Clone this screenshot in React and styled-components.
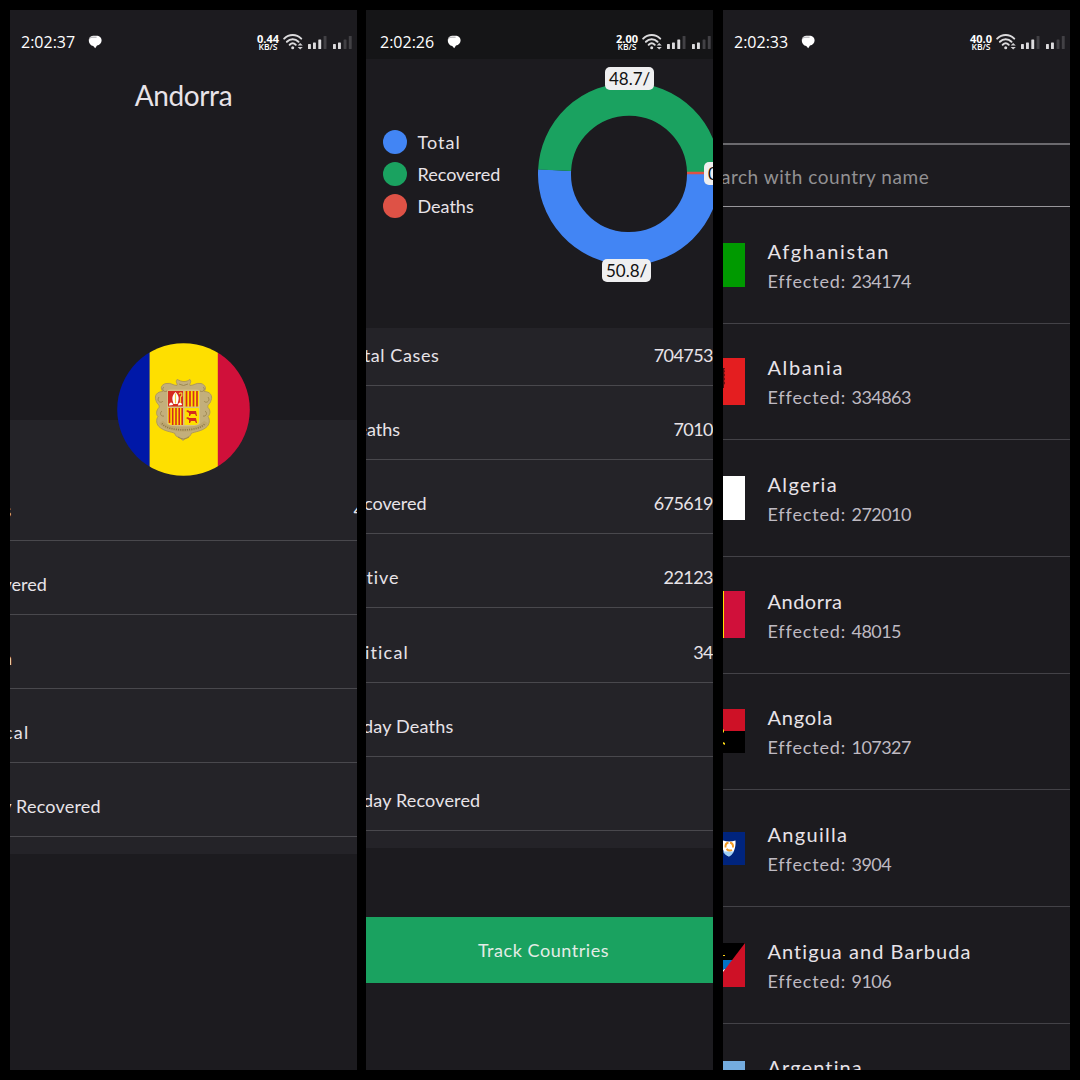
import React from "react";
import styled, { createGlobalStyle } from "styled-components";

const hand = `Lato, "Open Sans", sans-serif`;

const GlobalStyle = createGlobalStyle`
  * { box-sizing: border-box; }
  body { margin: 0; background: #000; }
`;

const Board = styled.main`
  display: flex;
  width: 1080px;
  height: 1080px;
  padding: 10px;
  overflow: hidden;
  background: #000;
  font-family: ${hand};
  color: #e8e3e8;
`;

const Phone = styled.section`
  display: flex;
  flex-direction: column;
  flex: none;
  width: 347px;
  height: 1060px;
  margin-right: ${(p) => p.$gap || 0}px;
  overflow: hidden;
  background: #1c1b1f;
`;

/* ---------- status bar ---------- */

const Bar = styled.header`
  display: flex;
  flex: none;
  align-items: center;
  height: 49px;
  padding: 15px 0 0 ${(p) => p.$left}px;
  background: ${(p) => (p.$dark ? "#151517" : "transparent")};
  color: #fff;
`;

const Clock = styled.time`
  width: 56px;
  font: 500 16px/20px "Open Sans", sans-serif;
  letter-spacing: 0;
  white-space: nowrap;
`;

const ChatIcon = styled.svg`
  flex: none;
  width: 14px;
  height: 14px;
  margin-left: 11px;
`;

const Speed = styled.div`
  flex: none;
  width: 24px;
  margin-left: ${(p) => p.$left}px;
  text-align: center;
  font: 700 11px/9px "Open Sans", sans-serif;
  white-space: nowrap;
`;

const Unit = styled.div`
  font-weight: 600;
  font-size: 8.5px;
  line-height: 8px;
`;

const Signals = styled.svg`
  flex: none;
  width: 70px;
  height: 16px;
  margin-left: 3px;
`;

function StatusBar({ time, speed, left, gap, dark }) {
  return (
    <Bar $left={left} $dark={dark}>
      <Clock>{time}</Clock>
      <ChatIcon viewBox="0 0 14 14">
        <path d="M5 .8h3.300C11.500.8 13.600 2.800 13.600 5.400c0 2.700-2 4.600-4.600 5L7.200 13.200 5.200 11C2.800 10.300 1 8.600.800 5.900.6 2.900 2.300.9 5 .8z" fill="#fff" />
        <path d="M.900 4.600C1.800 2.600 3.200 2.200 5 2.200h3.600" fill="none" stroke="#6b6a70" strokeWidth=".6" />
      </ChatIcon>
      <Speed $left={gap}>
        {speed}
        <Unit>KB/S</Unit>
      </Speed>
      <Signals viewBox="0 0 70 16">
        <g fill="none" stroke="#dcdbdd" strokeWidth="2" strokeLinecap="round">
          <path d="M1.200 4.600C6-.2 13.400-.2 18.200 4.600" />
          <path d="M3.900 7.700c3.300-3.200 8.300-3.200 11.600 0" />
          <path d="M6.700 10.700c1.800-1.700 4.200-1.700 6 0" />
        </g>
        <circle cx="9.700" cy="13.700" r="1.500" fill="#dcdbdd" />
        <path d="M14.600 11.600l2.600-2.600 2.600 2.600zM14.600 13l2.600 2.500 2.600-2.500z" fill="#cfced1" />
        <g fill="#dcdbdd">
          <rect x="25" y="10" width="2.900" height="5" rx=".6" />
          <rect x="30" y="8.500" width="2.900" height="6.500" rx=".6" />
          <rect x="35.300" y="5.500" width="2.900" height="9.500" rx=".6" />
          <rect x="50" y="10" width="2.900" height="5" rx=".6" />
          <rect x="55" y="8.500" width="2.900" height="6.500" rx=".6" />
        </g>
        <g fill="#424145">
          <rect x="40.600" y="2" width="2.900" height="13" rx=".6" />
          <rect x="60.600" y="5.500" width="2.900" height="9.500" rx=".6" />
          <rect x="65.800" y="2" width="2.900" height="13" rx=".6" />
        </g>
      </Signals>
    </Bar>
  );
}

/* ---------- shared statistics panel ---------- */

const Panel = styled.div`
  flex: none;
  height: ${(p) => p.$h}px;
  background: #242328;
`;

const StatRow = styled.div`
  display: flex;
  justify-content: space-between;
  align-items: flex-end;
  height: ${(p) => p.$h}px;
  margin: 0 ${(p) => p.$outR}px 0 ${(p) => p.$outL}px;
  padding-bottom: 18px;
  border-bottom: 1px solid #49484d;
  font-size: 18px;
  line-height: 24px;
  white-space: nowrap;
`;

const StatLabel = styled.span`
  letter-spacing: ${(p) => p.$track}px;
`;

const StatValue = styled.span`
  letter-spacing: -0.55px;
`;

function Stats({ rows, outL, outR, h, first }) {
  return (
    <Panel $h={h}>
      {rows.map(([label, value, track], i) => (
        <StatRow key={label} $h={i ? 74.15 : first} $outL={outL} $outR={outR}>
          <StatLabel $track={track}>{label}</StatLabel>
          {value && <StatValue>{value}</StatValue>}
        </StatRow>
      ))}
    </Panel>
  );
}

/* ---------- country detail ---------- */

const DetailTitle = styled.h1`
  margin: 18px 0 0;
  height: 37px;
  text-align: center;
  font-weight: 400;
  font-size: 28px;
  line-height: 36px;
  letter-spacing: -0.4px;
`;

const Avatar = styled.svg`
  flex: none;
  position: relative;
  width: 133px;
  height: 133px;
  margin: 229px auto -56.500px 107px;
`;

function AndorraFlag() {
  return (
    <Avatar viewBox="0 0 133 133">
      <defs>
        <clipPath id="round"><circle cx="66.500" cy="66.500" r="66.300" /></clipPath>
      </defs>
      <g clipPath="url(#round)">
        <rect width="33" height="133" fill="#0018a8" />
        <rect x="32.600" width="68.600" height="133" fill="#fedf00" />
        <rect x="100.800" width="33" height="133" fill="#d0103a" />
      </g>
      <path d="M60 36.500c-2 3 1 4 0 6-4 0-6-3-11-2-5 1-6 5-3 8-6 0-9 4-7 9 1 4 4 4 3 7-3 3-3 7-1 9-2 3-2 8 2 11 5 4 11 4 15 6 0 4 5 3 8 7 3-4 8-3 8-7 4-2 10-2 15-6 4-3 4-8 2-11 2-2 3-6 0-9-1-3 2-3 3-7 2-5-1-9-7-9 3-3 1-7-3-8-5-1-7 2-11 2-1-2 2-3 0-6-2 1-3 2-6 2s-4-1-7-2z" fill="#c3af7b" stroke="#aa955c" strokeWidth=".9" />
      <path d="M47 44c-3 2 0 6 3 4M86 44c3 2 0 6-3 4M42 54c-3 4 2 7 4 4M91 54c3 4-2 7-4 4M45 68c-3 2-1 6 2 5M88 68c3 2 1 6-2 5M62 41q4.500 3 9 0M61 94q5.500 4 11 0" fill="none" stroke="#9a854e" strokeWidth=".9" />
      <rect x="50" y="46.500" width="33" height="36.500" rx="3" fill="#d6c083" />
      <rect x="51" y="48" width="15" height="15.500" fill="#d52b1e" />
      <path d="M58.500 49q4 4 3 8l-1 4h-4l-1-4q-1-4 3-8zM52 62.500c0-4 4-4 4-.5zM61 62.500c0-4 4-4 4-.5z" fill="#fff" />
      <path d="M58.500 50.500v10M62 51c3-3 4 1 1.500 3v6" stroke="#f2cf3a" strokeWidth="1.200" fill="none" />
      <rect x="67.500" y="48" width="14.500" height="15.500" fill="#fedf00" />
      <path d="M69.500 48v15.500M73 48v15.500M76.500 48v15.500M80 48v15.500" stroke="#d52b1e" strokeWidth="1.700" />
      <path d="M51 65h15v17H55q-4 0-4-4z" fill="#fedf00" />
      <path d="M52.500 65v15M55.700 65v17M59 65v17M62.200 65v17M65.200 65v17" stroke="#d52b1e" strokeWidth="1.600" />
      <path d="M67.500 65H82v13q0 4-4 4H67.500z" fill="#fedf00" />
      <path d="M69 68l2-1 1 1h7l1 5h-1l-1-2h-4l-1 2h-1v-3zM69 75l2-1 1 1h7l1 5h-1l-1-2h-4l-1 2h-1v-3z" fill="#d52b1e" />
      <path d="M44 79c6 10 39 10 45 0" fill="none" stroke="#bda76f" strokeWidth="4.500" />
      <path d="M45 80.500c6 8.500 37 8.500 43 0" fill="none" stroke="#8a7545" strokeWidth="1.600" strokeDasharray="1 1.200" />
    </Avatar>
  );
}

/* ---------- world overview ---------- */

const Overview = styled.div`
  display: flex;
  flex: none;
  align-items: flex-start;
  height: 269px;
`;

const Legend = styled.ul`
  display: flex;
  flex-direction: column;
  flex: none;
  gap: 8px;
  width: 154px;
  margin: 71px 0 0;
  padding: 0 0 0 16.500px;
  list-style: none;
`;

const LegendItem = styled.li`
  display: flex;
  align-items: center;
  gap: 11px;
  height: 24px;
  font-size: 18px;
  line-height: 24px;
  letter-spacing: ${(p) => p.$track}px;

  &::before {
    content: "";
    width: 24px;
    height: 24px;
    border-radius: 50%;
    background: ${(p) => p.$color};
  }
`;

const Chart = styled.div`
  position: relative;
  flex: none;
  width: 182px;
  height: 182px;
  margin: 24px 0 0 17.500px;
`;

const Ring = styled.svg`
  display: block;
  width: 182px;
  height: 182px;
`;

const Badge = styled.span`
  position: absolute;
  left: ${(p) => p.$x}px;
  top: ${(p) => p.$y}px;
  width: 49px;
  height: 23px;
  padding-left: 4px;
  border-radius: 5px;
  background: #efeff0;
  color: #111;
  font-size: 17px;
  line-height: 24px;
  letter-spacing: 0px;
  white-space: nowrap;
`;

const TrackButton = styled.button`
  flex: none;
  height: 66px;
  margin-top: 69px;
  padding: 0 0 1px 8px;
  border: 0;
  background: #1aa260;
  color: #e3ece6;
  font: 18px/24px ${hand};
  letter-spacing: 0.55px;
`;

/* ---------- country list ---------- */

const SearchBox = styled.div`
  display: flex;
  flex: none;
  align-items: center;
  height: 63.500px;
  margin-top: 84px;
  padding-top: 2px;
  border-top: 2px solid #6b6a6e;
  border-bottom: 1px solid #98979b;
  color: #929193;
  font-size: 19px;
  white-space: nowrap;
`;

const Hint = styled.span`
  margin-left: -23.500px;
  letter-spacing: 0.55px;
`;

const Country = styled.article`
  display: flex;
  flex: none;
  align-items: center;
  height: 116.7px;
  border-bottom: 1px solid #434247;

  &:first-of-type {
    height: 117px;
  }
`;

const Flag = styled.svg`
  flex: none;
  width: 22px;
  height: ${(p) => p.$h}px;
`;

const Names = styled.div`
  display: flex;
  flex-direction: column;
  gap: 7px;
  margin-left: 22.500px;
  padding-top: 2px;
  white-space: nowrap;
`;

const Name = styled.span`
  font-size: 20px;
  line-height: 24px;
  letter-spacing: ${(p) => p.$track}px;
`;

const Effected = styled.span`
  color: #bfbac2;
  font-size: 18px;
  line-height: 23px;
  letter-spacing: 0.85px;
`;

const Count = styled.span`
  letter-spacing: -0.55px;
`;

const countries = [
  ["Afghanistan", "234174", 1.65, 44, <rect width="22" height="44" fill="#009a00" />],
  ["Albania", "334863", 1.6, 47, <>
    <rect width="22" height="47" fill="#e41e20" />
    <path d="M0 10h2l-1 2 1 1-1 2 1 2-1 2 1 2-1 2 1 2-1 2v3H0z" fill="#4b0d0e" />
  </>],
  ["Algeria", "272010", 1.35, 44, <rect width="22" height="44" fill="#fff" />],
  ["Andorra", "48015", 0.5, 47, <>
    <rect width="22" height="47" fill="#d0103a" />
    <rect width="1" height="47" fill="#fedf00" />
  </>],
  ["Angola", "107327", 0.8, 44, <>
    <rect width="22" height="22" fill="#ce1126" />
    <rect y="22" width="22" height="22" fill="#000" />
    <path d="M0 20.500h1v3H0zM0 33l2 1v2l-2-1z" fill="#f9d616" />
  </>],
  ["Anguilla", "3904", 1.3, 33, <>
    <rect width="22" height="33" fill="#00247d" />
    <path d="M0 8.500q6 2 12.500 0c.5 8-2 13-6.500 16-3-1.500-5-4-6-7z" fill="#fff" />
    <path d="M0 19.500h11q-2 3.500-5 5-4-1-6-5z" fill="#9fcff5" />
    <path d="M2.500 15.500q-.5-4 3-5M7 10.500q3.500 1 3 5M9 18q-3 1.500-5.500-1" fill="none" stroke="#f49b25" strokeWidth="1.900" />
  </>],
  ["Antigua and Barbuda", "9106", 1.05, 44, <>
    <rect width="22" height="44" fill="#000" />
    <rect y="17" width="22" height="11" fill="#0072c6" />
    <path d="M0 27l2-1v4H0z" fill="#fff" />
    <path d="M22 0v44H0V29z" fill="#ce1126" />
    <path d="M0 12h2v1H0z" fill="#fcd116" />
  </>],
  ["Argentina", "", 1.1, 41, <rect width="22" height="41" fill="#74acdf" />],
];

export default function App() {
  return (
    <Board>
      <GlobalStyle />

      <Phone $gap={9}>
        <StatusBar time="2:02:37" speed="0.44" left={11} gap={154} />
        <DetailTitle>Andorra</DetailTitle>
        <AndorraFlag />
        <Stats
          h={434}
          first={121}
          outL={-46}
          outR={-46}
          rows={[
            ["Cases", "48015", 0.3],
            ["Recovered", "", 0],
            ["Death", "", -0.1],
            ["Critical", "", 1.25],
            ["Today Recovered", "", 0.2],
          ]}
        />
      </Phone>

      <Phone $gap={10}>
        <StatusBar time="2:02:26" speed="2.00" left={14} gap={154} dark />
        <Overview>
          <Legend>
            <LegendItem $color="#4285f4" $track={1}>Total</LegendItem>
            <LegendItem $color="#1aa260" $track={0}>Recovered</LegendItem>
            <LegendItem $color="#de5246" $track={0}>Deaths</LegendItem>
          </Legend>
          <Chart>
            <Ring viewBox="0 0 182 182">
              <g fill="none" strokeWidth="33">
                <path d="M165.500 91A74.500 74.500 0 1 1 16.600 87.200" stroke="#4285f4" />
                <path d="M16.600 87.200A74.500 74.500 0 0 1 165.500 89" stroke="#1aa260" />
                <path d="M165.500 88.800V91.200" stroke="#de5246" />
              </g>
            </Ring>
            <Badge $x={67.5} $y={-16}>48.7/</Badge>
            <Badge $x={64.5} $y={175.5}>50.8/</Badge>
            <Badge $x={166.5} $y={78.5}>0.5/</Badge>
          </Chart>
        </Overview>
        <Stats
          h={520}
          first={58}
          outL={-22}
          outR={0}
          rows={[
            ["Total Cases", "704753", 0.6],
            ["Deaths", "7010", -0.05],
            ["Recovered", "675619", -0.05],
            ["Active", "22123", 0.95],
            ["Critical", "34", 1.2],
            ["Today Deaths", "", 0.2],
            ["Today Recovered", "", 0.17],
          ]}
        />
        <TrackButton>Track Countries</TrackButton>
      </Phone>

      <Phone>
        <StatusBar time="2:02:33" speed="40.0" left={11} gap={154} />
        <SearchBox>
          <Hint>Search with country name</Hint>
        </SearchBox>
        {countries.map(([name, count, track, h, art]) => (
          <Country key={name}>
            <Flag $h={h} viewBox={`0 0 22 ${h}`}>{art}</Flag>
            <Names>
              <Name $track={track}>{name}</Name>
              <Effected>Effected: <Count>{count}</Count></Effected>
            </Names>
          </Country>
        ))}
      </Phone>
    </Board>
  );
}
